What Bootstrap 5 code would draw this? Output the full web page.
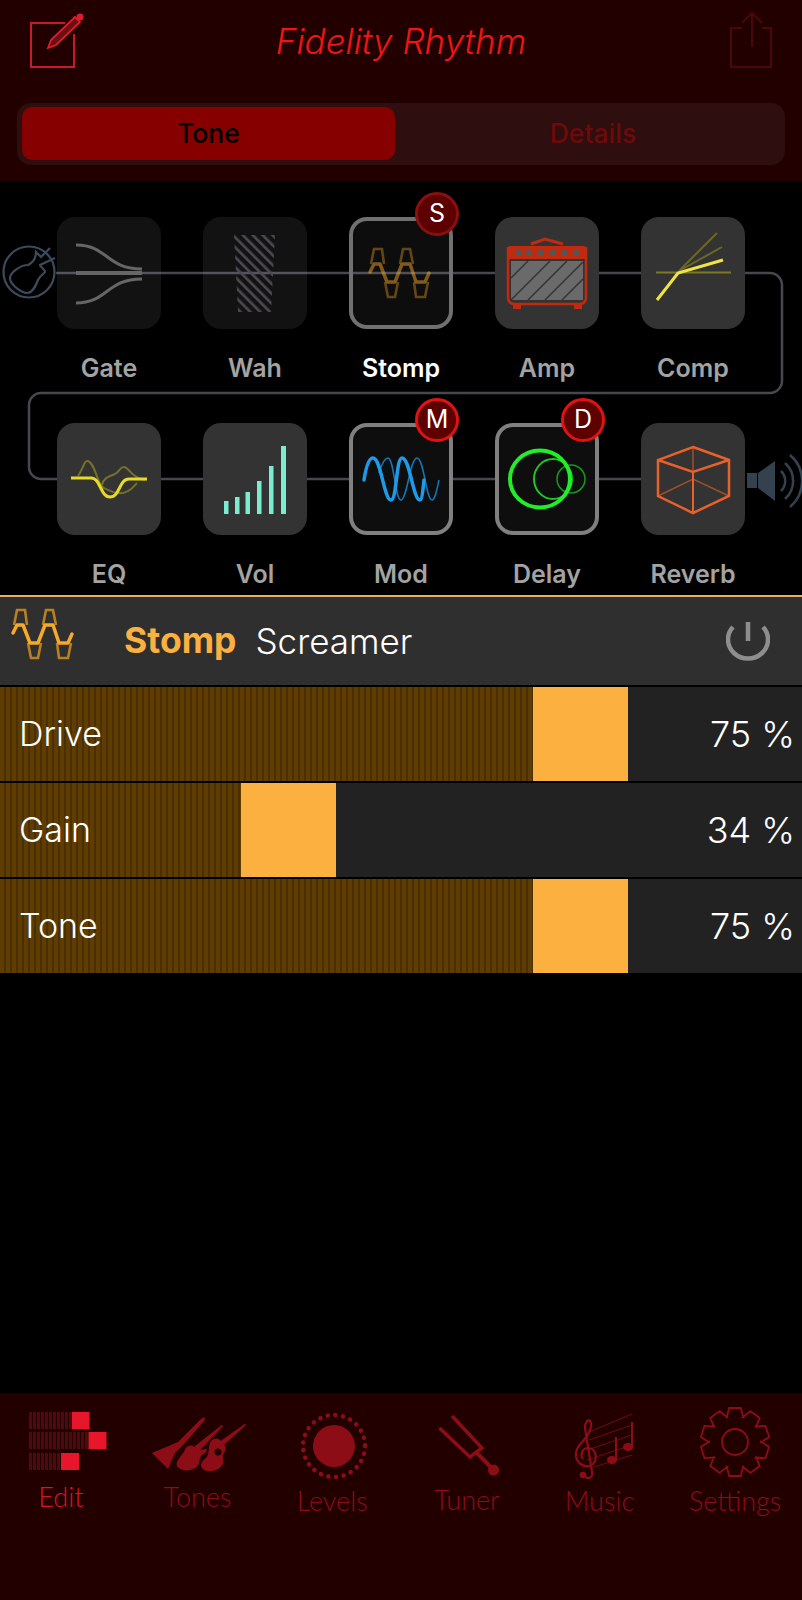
<!DOCTYPE html>
<html lang="en">
<head>
<meta charset="UTF-8">
<meta name="viewport" content="width=device-width, initial-scale=1.0">
<title>Fidelity Rhythm</title>
<link href="https://cdn.jsdelivr.net/npm/bootstrap@5.3.3/dist/css/bootstrap.min.css" rel="stylesheet">
<style>
html, body { background: #000; }
body { width: 802px; height: 1600px; overflow: hidden; font-family: Inter, "Liberation Sans", sans-serif; }
.app-top { height: 181px; background: #220000; padding: 0 17px; }
.top-bar { height: 103px; }
.top-title { font-size: 35px; font-weight: 300; font-style: italic; color: #f01414; line-height: 1; margin-top: 24px; }
.top-icon { width: 68px; height: 70px; margin-top: 8px; }
.seg-box { height: 62px; background: #2e0e0e; border-radius: 14px; padding: 4px 5px; }
.seg-item { flex: 1 1 0; border-radius: 10px; font-size: 26.5px; font-weight: 500; text-align: center; line-height: 53px; height: 53px; color: #6e0a0a; padding-left: 11px; }
.seg-on { flex: 0 0 373px; background: #870000; color: #000; padding-left: 0; }
.chain { height: 414px; padding-top: 36px; }
.wires { position: absolute; left: 0; top: 0; }
.chain-row { gap: 42px; padding-left: 57px; }
.chain-row2 { margin-top: 40px; }
.fx { width: 104px; position: relative; }
.fx-tile { width: 104px; height: 112px; border-radius: 18px; background: #333; position: relative; z-index: 1; }
.fx-tile svg { display: block; position: absolute; left: 0; top: 0; }
.fx-dim { background: rgba(255,255,255,.07); }
.fx-sel { background: #0e0e0e; box-shadow: inset 0 0 0 4px #808080; }
.fx-bypass { background: rgba(255,255,255,.05); box-shadow: inset 0 0 0 4px #707070; }
.fx-name { font-size: 25px; font-weight: 600; color: #a3a3a3; text-align: center; line-height: 30px; margin-top: 24px; white-space: nowrap; }
.fx-name.active-name { color: #fff; }
.fx-flag { position: absolute; right: -6px; top: -25px; width: 44px; height: 44px; border-radius: 50%; z-index: 2; background: #5c0000; border: 3px solid #e01212; color: #fff; font-size: 25px; text-align: center; line-height: 37px; }
.fx-flag.flag-off { border-color: #8a0f0f; }
.fx-head { height: 90px; background: #2f2f2f; border-top: 2px solid #e8ad6c; margin-bottom: 2px; position: relative; }
.fx-head-name { font-size: 35.5px; font-weight: 700; color: #fbb040; margin-left: 124px; }
.fx-head-model { font-size: 35px; font-weight: 300; color: #fff; margin-left: 19px; }
.wave-big { position: absolute; left: 0; top: 0; }
.power { position: absolute; right: 32px; top: 24px; }
.param { height: 94px; background: #222; margin-bottom: 2px; position: relative; font-size: 34px; font-weight: 300; color: #fff; line-height: 94px; }
.param-fill { height: 94px; background: repeating-linear-gradient(90deg, #5e3c02 0 4px, #4a2f00 4px 6px); position: absolute; left: 0; top: 0; }
.param-thumb { width: 95px; height: 94px; background: #fbb040; position: absolute; top: 0; }
.param-name { position: absolute; left: 19px; top: 0; }
.param-val { position: absolute; right: 7px; top: 0; font-size: 36px; }
.tabs { height: 207px; background: #220000; margin-top: auto; }
.tab-item { width: 133.66px; position: relative; height: 130px; text-align: center; color: #8c0d16; font-family: Lato, "Open Sans", sans-serif; font-size: 27px; font-weight: 300; }
.tab-item svg { display: block; margin: 17px auto 0; }
.tab-label { position: absolute; left: 0; right: 0; top: 92px; line-height: 30px; white-space: nowrap; }
.tab-on { color: #d81622; }
.tab-edit svg, .tab-tones svg { margin-top: 18px; }
.tab-levels svg { margin-top: 10px; }
.tab-settings svg { margin-top: 13px; }
.tab-edit .tab-label { top: 89px; left: -12px; }
.tab-tones .tab-label { top: 89px; left: -6px; }
.tab-levels .tab-label { top: 93px; left: -4px; }
.tab-tuner .tab-label { left: -2px; }
.tab-music .tab-label { top: 93px; left: -4px; }
.tab-settings .tab-label { top: 93px; }
</style>
</head>
<body class="d-flex flex-column">

<div class="app-top">
  <div class="top-bar d-flex align-items-start justify-content-between">
    <svg class="top-icon" viewBox="0 0 68 70" fill="none">
      <path d="M48 15H14V59H57V26" stroke="#c41c28" stroke-width="2"/>
      <path d="M31 40L34 32 58 9 63 14 39 37z" fill="#6a0f16" stroke="#e01c28" stroke-width="1.800"/>
      <circle cx="63" cy="9" r="3.500" fill="#e01c28"/>
    </svg>
    <div class="top-title">Fidelity Rhythm</div>
    <svg class="top-icon" viewBox="0 0 68 70" fill="none" stroke="#4a0909" stroke-width="2">
      <path d="M25 20H14V59H54V20H45"/>
      <path d="M35 39V5M25 15L35 5 45 15"/>
    </svg>
  </div>
  <div class="seg-box d-flex">
    <div class="seg-item seg-on">Tone</div>
    <div class="seg-item">Details</div>
  </div>
</div>

<div class="chain position-relative">
  <svg class="wires" width="802" height="414" fill="none">
    <path d="M56 92H770a12 12 0 0 1 12 12V200a12 12 0 0 1-12 12H41a12 12 0 0 0-12 12V286a12 12 0 0 0 12 12H650" stroke="#47474f" stroke-width="2.500"/>
    <circle cx="29" cy="91" r="25.500" stroke="#3c4b5c" stroke-width="2.200"/>
    <path d="M50 67L41 76 36 71C36 78 32 82 28 84 20 84 10 92 10 97 10 104 22 112 27 112 33 112 36 104 38 99 40 94 45 92 45 91 45 88 40 86 40 84L55 77" stroke="#3c4b5c" stroke-width="2.200"/>
    <g fill="#34424f">
      <rect x="747" y="292" width="10" height="15"/>
      <path d="M758 292l17-12v40l-17-13z"/>
    </g>
    <g stroke="#34424f" stroke-width="2.500">
      <path d="M781 290a14 14 0 0 1 0 20"/>
      <path d="M785 282a24 24 0 0 1 0 36"/>
      <path d="M790 274a34 34 0 0 1 0 52"/>
    </g>
  </svg>

  <div class="chain-row d-flex">
    <div class="fx">
      <div class="fx-tile fx-dim">
        <svg width="104" height="112" fill="none" stroke="#666" stroke-width="3">
          <path d="M19 28c32 0 30 24 66 24M19 86c32 0 30-24 66-24"/>
          <path d="M19 56H85" stroke-width="4"/>
        </svg>
      </div>
      <div class="fx-name">Gate</div>
    </div>
    <div class="fx">
      <div class="fx-tile fx-dim">
        <svg width="104" height="112" fill="none">
          <defs>
            <pattern id="hatch" width="7" height="7" patternUnits="userSpaceOnUse" patternTransform="rotate(-45)">
              <rect width="2.600" height="7" fill="#4d4852"/>
            </pattern>
          </defs>
          <path d="M31 18H72L68 95H35z" fill="url(#hatch)"/>
        </svg>
      </div>
      <div class="fx-name">Wah</div>
    </div>
    <div class="fx">
      <div class="fx-tile fx-bypass">
        <svg width="104" height="112" fill="none">
          <use href="#stompwave" x="8" y="-578" opacity=".5"/>
        </svg>
      </div>
      <div class="fx-flag flag-off">S</div>
      <div class="fx-name active-name">Stomp</div>
    </div>
    <div class="fx">
      <div class="fx-tile">
        <svg width="104" height="112" fill="none" stroke="#c22a10" stroke-width="2.500">
          <path d="M36 27l14-5 18 5" stroke-width="3"/>
          <path d="M12 42V33a4 4 0 0 1 4-4H88a4 4 0 0 1 4 4V42z" fill="#c22a10" stroke="none"/>
          <rect x="16" y="44" width="72" height="39" fill="#6a6a6a" stroke="none"/>
          <path d="M13 30V81a6 6 0 0 0 6 6H85a6 6 0 0 0 6-6V30"/>
          <g stroke="#333" stroke-width="1.500">
            <path d="M16 61L33 44M16 83L55 44M33 83L72 44M50 83L88 45M67 83L88 62"/>
          </g>
          <g fill="#555" stroke="none">
            <circle cx="24" cy="36" r="3.200"/><circle cx="34" cy="36" r="3.200"/><circle cx="46" cy="36" r="3.200"/><circle cx="58" cy="36" r="3.200"/><circle cx="69" cy="36" r="3.200"/><circle cx="81" cy="36" r="3.200"/>
          </g>
          <path d="M18 90h8M79 90h8" stroke-width="4"/>
        </svg>
      </div>
      <div class="fx-name">Amp</div>
    </div>
    <div class="fx">
      <div class="fx-tile">
        <svg width="104" height="112" fill="none">
          <path d="M15 55.500H90" stroke="#7c7a26" stroke-width="2"/>
          <path d="M38 54L76 16M38 54L81 30" stroke="#6a6826" stroke-width="2"/>
          <path d="M16 83L37 56L82 43" stroke="#f0e442" stroke-width="3"/>
        </svg>
      </div>
      <div class="fx-name">Comp</div>
    </div>
  </div>

  <div class="chain-row chain-row2 d-flex">
    <div class="fx">
      <div class="fx-tile">
        <svg width="104" height="112" fill="none">
          <path d="M21 53C26 46 27 38 30 38 38 38 40 62 47 65 56 70 65 72 71 68 75 66 78 62 80 60" stroke="#74722a" stroke-width="2"/>
          <path d="M45 62C46 56 50 54 58 51 63 48 63 44 67 44 72 44 74 55 88 57" stroke="#74722a" stroke-width="2"/>
          <path d="M14 55H34C44 55 43 74 53 74 63 74 62 56 72 56H90" stroke="#e6dc24" stroke-width="3"/>
        </svg>
      </div>
      <div class="fx-name">EQ</div>
    </div>
    <div class="fx">
      <div class="fx-tile">
        <svg width="104" height="112" fill="#7ceccf">
          <rect x="21" y="78" width="4.500" height="13"/>
          <rect x="32" y="74" width="4.500" height="17"/>
          <rect x="42.500" y="69" width="4.500" height="22"/>
          <rect x="54" y="58" width="4.500" height="33"/>
          <rect x="66" y="43" width="4.500" height="48"/>
          <rect x="78" y="23" width="5" height="68"/>
        </svg>
      </div>
      <div class="fx-name">Vol</div>
    </div>
    <div class="fx">
      <div class="fx-tile fx-sel">
        <svg width="104" height="112" fill="none">
          <path d="M30 50C33 40 36 35 39 35 45 35 46 77 52 77 58 77 61 35 68 35 75 35 77 77 83 77 86 77 88 66 90 57" stroke="#1577b8" stroke-width="1.500"/>
          <path d="M15 57C17 44 20 35 24 35 32 35 35 77 42 77 48 77 47 35 53 35 61 35 64 77 71 77 73 77 74 66 75 57" stroke="#1e9ae6" stroke-width="3.500" stroke-linecap="round"/>
        </svg>
      </div>
      <div class="fx-flag">M</div>
      <div class="fx-name">Mod</div>
    </div>
    <div class="fx">
      <div class="fx-tile fx-sel">
        <svg width="104" height="112" fill="none">
          <ellipse cx="76" cy="56" rx="14" ry="14" stroke="#179a1c" stroke-width="1.500"/>
          <ellipse cx="58" cy="56" rx="19" ry="20" stroke="#1fc426" stroke-width="2"/>
          <ellipse cx="45" cy="56" rx="30" ry="28.500" stroke="#22ee28" stroke-width="4"/>
        </svg>
      </div>
      <div class="fx-flag">D</div>
      <div class="fx-name">Delay</div>
    </div>
    <div class="fx">
      <div class="fx-tile">
        <svg width="104" height="112" fill="none" stroke="#e8602a">
          <path d="M52 24V49M17 73L52 56 88 73" stroke-width="1.500" opacity=".6"/>
          <path d="M52 49V90" stroke-width="2"/>
          <path d="M52 24L88 37V73L52 90 17 73V37zM17 37L52 49 88 37" stroke-width="2.500"/>
        </svg>
      </div>
      <div class="fx-name">Reverb</div>
    </div>
  </div>
</div>

<div class="fx-head d-flex align-items-center">
  <svg class="wave-big" width="90" height="88" viewBox="0 597 90 88" fill="none">
    <g id="stompwave">
      <path d="M14 625L17 610H25L27 625M43 625L46 610H53L56 625M28 643L31 658H38L41 643M57 643L59 658H68L71 643" stroke="#b9801f" stroke-width="2.600"/>
      <path d="M13 633L17 625H23L30 643H38L45 625H53L59 643H68L72 634" stroke="#f7a928" stroke-width="3.500" stroke-linecap="round" stroke-linejoin="round"/>
    </g>
  </svg>
  <span class="fx-head-name">Stomp</span><span class="fx-head-model">Screamer</span>
  <svg class="power" width="44" height="42" fill="none" stroke="#8e8e8e" stroke-width="4.500">
    <path d="M7 6A20 19 0 1 0 37 6"/>
    <path d="M22 1V20"/>
  </svg>
</div>

<div id="params"></div>

<div class="tabs d-flex flex-nowrap">
  <div class="tab-item tab-edit tab-on">
    <svg width="100" height="80" viewBox="0 0 100 80">
      <defs>
        <pattern id="barstripe" width="4" height="4" patternUnits="userSpaceOnUse">
          <rect width="3" height="4" fill="#4f0a10"/>
        </pattern>
      </defs>
      <rect x="11" y="1" width="44" height="17" fill="url(#barstripe)"/>
      <rect x="55" y="1" width="17.500" height="17" fill="#e8162a"/>
      <rect x="11" y="21" width="61" height="17" fill="url(#barstripe)"/>
      <rect x="71.500" y="21" width="18" height="17" fill="#e8162a"/>
      <rect x="11" y="42" width="33" height="17" fill="url(#barstripe)"/>
      <rect x="44" y="42" width="18" height="17" fill="#e8162a"/>
    </svg>
    <div class="tab-label">Edit</div>
  </div>
  <div class="tab-item tab-tones">
    <svg width="100" height="80" viewBox="0 0 100 80" fill="#8c0d16">
      <path d="M2 42L28 31 51 8 54 6 55 9 35 32 25 42 18 58z"/>
      <path d="M35 37C38 33 42 34 44 35L72 13 74 15 52 38 58 37 56 42C52 44 50 46 50 50 50 56 44 60 36 60 30 60 25 56 26 52 27 46 33 44 35 37Z" stroke="#220000" stroke-width="1.200"/>
      <path d="M62 28C66 26 69 27 71 29L95 12 97 14 75 34C77 38 76 41 74 43 72 46 76 50 73 54 70 60 60 62 55 60 50 58 49 54 52 50 55 46 58 46 58 40 58 34 60 30 62 28Z" stroke="#220000" stroke-width="1.200"/>
      <circle cx="68" cy="41" r="3.500" fill="#220000"/>
    </svg>
    <div class="tab-label">Tones</div>
  </div>
  <div class="tab-item tab-levels">
    <svg width="100" height="80" viewBox="0 0 100 80">
      <circle cx="50" cy="43" r="21" fill="#8c0d16"/>
      <circle cx="50" cy="43" r="31" fill="none" stroke="#8c0d16" stroke-width="4.500" stroke-linecap="round" stroke-dasharray="0.100 7.650"/>
    </svg>
    <div class="tab-label">Levels</div>
  </div>
  <div class="tab-item tab-tuner">
    <svg width="100" height="80" viewBox="0 0 100 80" fill="none" stroke="#8c0d16">
      <path d="M34 6L64 38 52 47 21.500 18" stroke-width="3.500"/>
      <path d="M59 43L75.500 60" stroke-width="4"/>
      <circle cx="75.500" cy="60" r="5.500" fill="#8c0d16" stroke="none"/>
    </svg>
    <div class="tab-label">Tuner</div>
  </div>
  <div class="tab-item tab-music">
    <svg width="100" height="80" viewBox="0 0 100 80" fill="none" stroke="#660a12">
      <path d="M38 22L81 4M38 30L81 15M36 40L81 25M36 50L81 35M40 58L81 45" stroke-width="1.200"/>
      <path d="M33 66C37 70 42 68 41 62L34 18C34 12 37 9 39 11 42 15 39 24 32 31 26 37 24 42 25 47 27 55 36 59 42 54 47 49 45 38 37 38 31 38 29 45 32 49" stroke="#8c0d16" stroke-width="2.200"/>
      <circle cx="32" cy="65" r="3.200" fill="#8c0d16" stroke="none"/>
      <path d="M65 27V50M81 12V37" stroke="#8c0d16" stroke-width="2"/>
      <ellipse cx="61" cy="50" rx="5" ry="4" fill="#8c0d16" stroke="none"/>
      <ellipse cx="77" cy="37" rx="5" ry="4" fill="#8c0d16" stroke="none"/>
    </svg>
    <div class="tab-label">Music</div>
  </div>
  <div class="tab-item tab-settings">
    <svg width="72" height="72" viewBox="-36 -36 72 72" fill="none" stroke="#8c0d16" stroke-width="1.800">
      <circle r="13"/>
      <path id="cog"></path>
    </svg>
    <div class="tab-label">Settings</div>
  </div>
</div>

<script>
  const params = [
    { name: 'Drive', value: 75 },
    { name: 'Gain', value: 34 },
    { name: 'Tone', value: 75 }
  ];
  const trackRoom = 710;
  const box = document.getElementById('params');
  params.forEach(p => {
    const fill = Math.round(trackRoom * p.value / 100);
    box.innerHTML += `
      <div class="param">
        <div class="param-fill" style="width:${fill}px"></div>
        <div class="param-thumb" style="left:${fill}px"></div>
        <div class="param-name">${p.name}</div>
        <div class="param-val">${p.value} %</div>
      </div>`;
  });

  // gear outline, 10 teeth
  let d = '';
  const teeth = 10;
  for (let i = 0; i < teeth; i++) {
    const a = i * 2 * Math.PI / teeth - Math.PI / 2;
    const pts = [[-0.32, 26], [-0.17, 34.5], [0.17, 34.5], [0.32, 26]];
    pts.forEach((pt, j) => {
      const x = (pt[1] * Math.cos(a + pt[0])).toFixed(1);
      const y = (pt[1] * Math.sin(a + pt[0])).toFixed(1);
      d += (i === 0 && j === 0 ? 'M' : 'L') + x + ' ' + y;
    });
  }
  document.getElementById('cog').setAttribute('d', d + 'Z');
</script>
<script src="https://cdn.jsdelivr.net/npm/bootstrap@5.3.3/dist/js/bootstrap.bundle.min.js"></script>
</body>
</html>
